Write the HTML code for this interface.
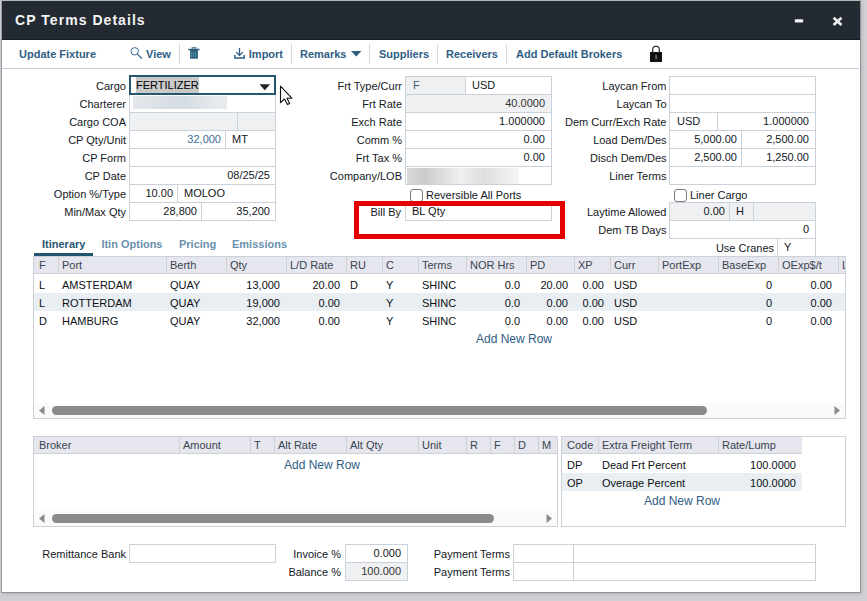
<!DOCTYPE html>
<html><head><meta charset="utf-8"><style>
html,body{margin:0;padding:0;}
body{width:867px;height:601px;position:relative;overflow:hidden;background:#cfcfd4;font-family:"Liberation Sans",sans-serif;}
body>div,body>svg{position:absolute;}
.t{position:absolute;white-space:nowrap;}
</style></head><body>
<div style="left:1px;top:0;width:860px;height:593px;background:#fff;border-left:1px solid #9c9ea3;border-right:1px solid #8f9197;border-bottom:1px solid #8f9197;border-top:1px solid #b5b6ba;box-sizing:border-box;box-shadow:1px 1px 3px rgba(0,0,0,0.12)"></div>
<div style="left:2px;top:1px;width:858px;height:39px;background:#232a31;"></div>
<div style="left:2px;top:39px;width:858px;height:1px;background:#161d22;"></div>
<div class="t" style="left:15px;top:11px;font:bold 14px/18px 'Liberation Sans',sans-serif;color:#f4f4f4;letter-spacing:1.05px;">CP Terms Details</div>
<svg style="position:absolute;left:794px;top:18px" width="11" height="6" viewBox="0 0 11 6"><rect x="0.8" y="1.3" width="8.4" height="3.2" rx="0.8" fill="#f2f2f2"/></svg>
<svg style="position:absolute;left:832px;top:16px" width="11" height="11" viewBox="0 0 11 11"><path d="M1.6 1.7 L9.5 8.9 M9.5 1.7 L1.6 8.9" stroke="#ececec" stroke-width="2.7" stroke-linecap="butt"/></svg>
<div class="t" style="left:19px;top:45px;font:bold 11px/18px 'Liberation Sans',sans-serif;color:#2f5d84;">Update Fixture</div>
<svg style="position:absolute;left:129px;top:46px" width="14" height="14" viewBox="0 0 14 14"><circle cx="5.7" cy="5.3" r="3.7" fill="none" stroke="#3a6b95" stroke-width="1"/><path d="M8.4 8.1 L12.5 12.3" stroke="#3a6b95" stroke-width="1.3" stroke-linecap="round"/></svg>
<div class="t" style="left:146px;top:45px;font:bold 11px/18px 'Liberation Sans',sans-serif;color:#2f5d84;">View</div>
<div style="left:179px;top:44px;width:1px;height:20px;background:#d3dae1;"></div>
<svg style="position:absolute;left:188px;top:46px" width="12" height="14" viewBox="0 0 12 14"><rect x="4.1" y="1.4" width="3.8" height="1.6" fill="none" stroke="#5a7f95" stroke-width="0.9"/><rect x="0.2" y="2.8" width="11.4" height="1.4" fill="#2d5f7a"/><rect x="2.1" y="4" width="7.8" height="8.7" fill="#2d5f7a"/><path d="M3.6 5.6 V11.4 M5.6 5.6 V11.4 M7.6 5.6 V11.4" stroke="#4f93a5" stroke-width="0.9"/></svg>
<svg style="position:absolute;left:233px;top:47px" width="13" height="12" viewBox="0 0 13 12"><path d="M6.5 1 V8.2" stroke="#2f5d84" stroke-width="1.3"/><path d="M3.3 5.2 L6.5 8.4 L9.7 5.2" fill="none" stroke="#2f5d84" stroke-width="1.3"/><path d="M1.8 8 V11 H11.2 V8" fill="none" stroke="#2f5d84" stroke-width="1.5"/></svg>
<div class="t" style="left:248.8px;top:45px;font:bold 11px/18px 'Liberation Sans',sans-serif;color:#2f5d84;">Import</div>
<div style="left:291px;top:44px;width:1px;height:20px;background:#d3dae1;"></div>
<div class="t" style="left:300px;top:45px;font:bold 11px/18px 'Liberation Sans',sans-serif;color:#2f5d84;">Remarks</div>
<svg style="position:absolute;left:351px;top:51px" width="11" height="6" viewBox="0 0 11 6"><path d="M0 0 H10.5 L5.25 5.6 Z" fill="#2d5f7a"/></svg>
<div style="left:369px;top:44px;width:1px;height:20px;background:#d3dae1;"></div>
<div class="t" style="left:379px;top:45px;font:bold 11px/18px 'Liberation Sans',sans-serif;color:#2f5d84;">Suppliers</div>
<div style="left:437px;top:44px;width:1px;height:20px;background:#d3dae1;"></div>
<div class="t" style="left:446px;top:45px;font:bold 11px/18px 'Liberation Sans',sans-serif;color:#2f5d84;">Receivers</div>
<div style="left:506px;top:44px;width:1px;height:20px;background:#d3dae1;"></div>
<div class="t" style="left:516px;top:45px;font:bold 11px/18px 'Liberation Sans',sans-serif;color:#2f5d84;">Add Default Brokers</div>
<svg style="position:absolute;left:649px;top:45px" width="14" height="18" viewBox="0 0 14 18"><path d="M3.7 7.5 V4.6 A3.3 3.3 0 0 1 10.3 4.6 V7.5" fill="none" stroke="#111" stroke-width="1.1"/><rect x="1" y="7" width="12" height="10" fill="#111"/><rect x="6.6" y="10" width="0.9" height="4" fill="#bbb"/></svg>
<div style="left:2px;top:68px;width:857px;height:1px;background:#c6cfd8;"></div>
<div style="left:129px;top:75px;width:147px;height:20px;border:2px solid #27566f;box-sizing:border-box;background:#fff"></div>
<div style="left:136px;top:77px;width:63px;height:16px;background:#c9c9c9;"></div>
<div class="t" style="left:136px;top:76px;font:11px/18px 'Liberation Sans',sans-serif;color:#000;">FERTILIZER</div>
<svg style="position:absolute;left:259px;top:84px" width="12" height="7" viewBox="0 0 12 7"><path d="M0.5 0.3 H11 L5.75 6.3 Z" fill="#222"/></svg>
<div class="t" style="left:-74px;top:77px;width:200px;text-align:right;font:11px/18px 'Liberation Sans',sans-serif;color:#141823;">Cargo</div>
<div style="left:129px;top:112px;width:147px;height:18px;background:#eff0f2;"></div>
<div style="left:129px;top:112px;width:147px;height:1px;background:#cad1d9;"></div>
<div style="left:129px;top:130px;width:147px;height:1px;background:#cad1d9;"></div>
<div style="left:129px;top:148px;width:147px;height:1px;background:#cad1d9;"></div>
<div style="left:129px;top:166px;width:147px;height:1px;background:#cad1d9;"></div>
<div style="left:129px;top:184px;width:147px;height:1px;background:#cad1d9;"></div>
<div style="left:129px;top:202px;width:147px;height:1px;background:#cad1d9;"></div>
<div style="left:129px;top:220px;width:147px;height:1px;background:#cad1d9;"></div>
<div style="left:129px;top:95px;width:1px;height:126px;background:#cad1d9;"></div>
<div style="left:275px;top:95px;width:1px;height:126px;background:#cad1d9;"></div>
<div style="left:237px;top:112px;width:1px;height:18px;background:#cad1d9;"></div>
<div style="left:225px;top:130px;width:1px;height:18px;background:#cad1d9;"></div>
<div style="left:177px;top:184px;width:1px;height:18px;background:#cad1d9;"></div>
<div style="left:201px;top:202px;width:1px;height:18px;background:#cad1d9;"></div>
<div style="left:133px;top:96px;width:94px;height:13px;background:linear-gradient(90deg,#e3e7eb 0%,#d9dfe4 35%,#d6dde2 55%,#e4e8ec 85%,#e9ecef 100%);filter:blur(0.4px)"></div>
<div class="t" style="left:-74px;top:95px;width:200px;text-align:right;font:11px/18px 'Liberation Sans',sans-serif;color:#141823;">Charterer</div>
<div class="t" style="left:-74px;top:113px;width:200px;text-align:right;font:11px/18px 'Liberation Sans',sans-serif;color:#141823;">Cargo COA</div>
<div class="t" style="left:-74px;top:131px;width:200px;text-align:right;font:11px/18px 'Liberation Sans',sans-serif;color:#141823;">CP Qty/Unit</div>
<div class="t" style="left:-74px;top:149px;width:200px;text-align:right;font:11px/18px 'Liberation Sans',sans-serif;color:#141823;">CP Form</div>
<div class="t" style="left:-74px;top:167px;width:200px;text-align:right;font:11px/18px 'Liberation Sans',sans-serif;color:#141823;">CP Date</div>
<div class="t" style="left:-74px;top:185px;width:200px;text-align:right;font:11px/18px 'Liberation Sans',sans-serif;color:#141823;">Option %/Type</div>
<div class="t" style="left:-74px;top:203px;width:200px;text-align:right;font:11px/18px 'Liberation Sans',sans-serif;color:#141823;">Min/Max Qty</div>
<div class="t" style="left:141px;top:130px;width:80px;text-align:right;font:11px/18px 'Liberation Sans',sans-serif;color:#3d6d99;">32,000</div>
<div class="t" style="left:232px;top:130px;font:11px/18px 'Liberation Sans',sans-serif;color:#141823;">MT</div>
<div class="t" style="left:190px;top:166px;width:80px;text-align:right;font:11px/18px 'Liberation Sans',sans-serif;color:#141823;">08/25/25</div>
<div class="t" style="left:133px;top:184px;width:40px;text-align:right;font:11px/18px 'Liberation Sans',sans-serif;color:#141823;">10.00</div>
<div class="t" style="left:184px;top:184px;font:11px/18px 'Liberation Sans',sans-serif;color:#141823;">MOLOO</div>
<div class="t" style="left:137px;top:202px;width:60px;text-align:right;font:11px/18px 'Liberation Sans',sans-serif;color:#141823;">28,800</div>
<div class="t" style="left:210px;top:202px;width:60px;text-align:right;font:11px/18px 'Liberation Sans',sans-serif;color:#141823;">35,200</div>
<div style="left:405px;top:76px;width:60px;height:18px;background:#eff0f2;"></div>
<div style="left:405px;top:94px;width:147px;height:18px;background:#eff0f2;"></div>
<div style="left:405px;top:76px;width:147px;height:1px;background:#cad1d9;"></div>
<div style="left:405px;top:94px;width:147px;height:1px;background:#cad1d9;"></div>
<div style="left:405px;top:112px;width:147px;height:1px;background:#cad1d9;"></div>
<div style="left:405px;top:130px;width:147px;height:1px;background:#cad1d9;"></div>
<div style="left:405px;top:148px;width:147px;height:1px;background:#cad1d9;"></div>
<div style="left:405px;top:166px;width:147px;height:1px;background:#cad1d9;"></div>
<div style="left:405px;top:184px;width:147px;height:1px;background:#cad1d9;"></div>
<div style="left:405px;top:76px;width:1px;height:109px;background:#cad1d9;"></div>
<div style="left:551px;top:76px;width:1px;height:109px;background:#cad1d9;"></div>
<div style="left:465px;top:76px;width:1px;height:18px;background:#cad1d9;"></div>
<div class="t" style="left:202px;top:77px;width:200px;text-align:right;font:11px/18px 'Liberation Sans',sans-serif;color:#141823;">Frt Type/Curr</div>
<div class="t" style="left:202px;top:95px;width:200px;text-align:right;font:11px/18px 'Liberation Sans',sans-serif;color:#141823;">Frt Rate</div>
<div class="t" style="left:202px;top:113px;width:200px;text-align:right;font:11px/18px 'Liberation Sans',sans-serif;color:#141823;">Exch Rate</div>
<div class="t" style="left:202px;top:131px;width:200px;text-align:right;font:11px/18px 'Liberation Sans',sans-serif;color:#141823;">Comm %</div>
<div class="t" style="left:202px;top:149px;width:200px;text-align:right;font:11px/18px 'Liberation Sans',sans-serif;color:#141823;">Frt Tax %</div>
<div class="t" style="left:202px;top:167px;width:200px;text-align:right;font:11px/18px 'Liberation Sans',sans-serif;color:#141823;">Company/LOB</div>
<div class="t" style="left:413px;top:76px;font:11px/18px 'Liberation Sans',sans-serif;color:#3c5a78;">F</div>
<div class="t" style="left:472px;top:76px;font:11px/18px 'Liberation Sans',sans-serif;color:#141823;">USD</div>
<div class="t" style="left:465px;top:94px;width:80px;text-align:right;font:11px/18px 'Liberation Sans',sans-serif;color:#333;">40.0000</div>
<div class="t" style="left:465px;top:112px;width:80px;text-align:right;font:11px/18px 'Liberation Sans',sans-serif;color:#141823;">1.000000</div>
<div class="t" style="left:465px;top:130px;width:80px;text-align:right;font:11px/18px 'Liberation Sans',sans-serif;color:#141823;">0.00</div>
<div class="t" style="left:465px;top:148px;width:80px;text-align:right;font:11px/18px 'Liberation Sans',sans-serif;color:#141823;">0.00</div>
<div style="left:407px;top:168px;width:112px;height:16px;background:linear-gradient(90deg,#d9d9d9 0%,#cbcbcb 15%,#dcdcdc 30%,#f0f0f0 48%,#dedede 68%,#ececec 88%,#f6f6f6 100%);filter:blur(0.5px)"></div>
<div style="left:410px;top:189px;width:13px;height:13px;border:1px solid #7a7a7a;border-radius:3px;box-sizing:border-box;background:#fff"></div>
<div class="t" style="left:426px;top:186px;font:11px/18px 'Liberation Sans',sans-serif;color:#141823;">Reversible All Ports</div>
<div style="left:405px;top:202px;width:147px;height:19px;border:1px solid #cad1d9;box-sizing:border-box;"></div>
<div class="t" style="left:201px;top:203px;width:200px;text-align:right;font:11px/18px 'Liberation Sans',sans-serif;color:#141823;">Bill By</div>
<div class="t" style="left:412px;top:202px;font:11px/18px 'Liberation Sans',sans-serif;color:#111;">BL Qty</div>
<div style="left:669px;top:76px;width:147px;height:1px;background:#cad1d9;"></div>
<div style="left:669px;top:94px;width:147px;height:1px;background:#cad1d9;"></div>
<div style="left:669px;top:112px;width:147px;height:1px;background:#cad1d9;"></div>
<div style="left:669px;top:130px;width:147px;height:1px;background:#cad1d9;"></div>
<div style="left:669px;top:148px;width:147px;height:1px;background:#cad1d9;"></div>
<div style="left:669px;top:166px;width:147px;height:1px;background:#cad1d9;"></div>
<div style="left:669px;top:184px;width:147px;height:1px;background:#cad1d9;"></div>
<div style="left:669px;top:76px;width:1px;height:109px;background:#cad1d9;"></div>
<div style="left:815px;top:76px;width:1px;height:109px;background:#cad1d9;"></div>
<div style="left:717px;top:112px;width:1px;height:18px;background:#cad1d9;"></div>
<div style="left:741px;top:130px;width:1px;height:36px;background:#cad1d9;"></div>
<div class="t" style="left:466.5px;top:77px;width:200px;text-align:right;font:11px/18px 'Liberation Sans',sans-serif;color:#141823;">Laycan From</div>
<div class="t" style="left:466.5px;top:95px;width:200px;text-align:right;font:11px/18px 'Liberation Sans',sans-serif;color:#141823;">Laycan To</div>
<div class="t" style="left:466.5px;top:113px;width:200px;text-align:right;font:11px/18px 'Liberation Sans',sans-serif;color:#141823;">Dem Curr/Exch Rate</div>
<div class="t" style="left:466.5px;top:131px;width:200px;text-align:right;font:11px/18px 'Liberation Sans',sans-serif;color:#141823;">Load Dem/Des</div>
<div class="t" style="left:466.5px;top:149px;width:200px;text-align:right;font:11px/18px 'Liberation Sans',sans-serif;color:#141823;">Disch Dem/Des</div>
<div class="t" style="left:466.5px;top:167px;width:200px;text-align:right;font:11px/18px 'Liberation Sans',sans-serif;color:#141823;">Liner Terms</div>
<div class="t" style="left:677px;top:112px;font:11px/18px 'Liberation Sans',sans-serif;color:#141823;">USD</div>
<div class="t" style="left:729px;top:112px;width:80px;text-align:right;font:11px/18px 'Liberation Sans',sans-serif;color:#141823;">1.000000</div>
<div class="t" style="left:657px;top:130px;width:80px;text-align:right;font:11px/18px 'Liberation Sans',sans-serif;color:#141823;">5,000.00</div>
<div class="t" style="left:729px;top:130px;width:80px;text-align:right;font:11px/18px 'Liberation Sans',sans-serif;color:#141823;">2,500.00</div>
<div class="t" style="left:657px;top:148px;width:80px;text-align:right;font:11px/18px 'Liberation Sans',sans-serif;color:#141823;">2,500.00</div>
<div class="t" style="left:729px;top:148px;width:80px;text-align:right;font:11px/18px 'Liberation Sans',sans-serif;color:#141823;">1,250.00</div>
<div style="left:674px;top:189px;width:13px;height:13px;border:1px solid #7a7a7a;border-radius:3px;box-sizing:border-box;background:#fff"></div>
<div class="t" style="left:690px;top:186px;font:11px/18px 'Liberation Sans',sans-serif;color:#141823;">Liner Cargo</div>
<div style="left:669px;top:202px;width:147px;height:18px;background:#eff0f2;"></div>
<div style="left:669px;top:202px;width:147px;height:1px;background:#cad1d9;"></div>
<div style="left:669px;top:220px;width:147px;height:1px;background:#cad1d9;"></div>
<div style="left:669px;top:238px;width:147px;height:1px;background:#cad1d9;"></div>
<div style="left:669px;top:202px;width:1px;height:37px;background:#cad1d9;"></div>
<div style="left:815px;top:202px;width:1px;height:55px;background:#cad1d9;"></div>
<div style="left:729px;top:202px;width:1px;height:18px;background:#cad1d9;"></div>
<div style="left:753px;top:202px;width:1px;height:18px;background:#cad1d9;"></div>
<div class="t" style="left:466.5px;top:203px;width:200px;text-align:right;font:11px/18px 'Liberation Sans',sans-serif;color:#141823;">Laytime Allowed</div>
<div class="t" style="left:466.5px;top:221px;width:200px;text-align:right;font:11px/18px 'Liberation Sans',sans-serif;color:#141823;">Dem TB Days</div>
<div class="t" style="left:665px;top:202px;width:60px;text-align:right;font:11px/18px 'Liberation Sans',sans-serif;color:#141823;">0.00</div>
<div class="t" style="left:736px;top:202px;font:11px/18px 'Liberation Sans',sans-serif;color:#141823;">H</div>
<div class="t" style="left:749px;top:220px;width:60px;text-align:right;font:11px/18px 'Liberation Sans',sans-serif;color:#141823;">0</div>
<div style="left:777px;top:238px;width:1px;height:19px;background:#cad1d9;"></div>
<div class="t" style="left:574px;top:239px;width:200px;text-align:right;font:11px/18px 'Liberation Sans',sans-serif;color:#141823;">Use Cranes</div>
<div class="t" style="left:784px;top:238px;font:11px/18px 'Liberation Sans',sans-serif;color:#141823;">Y</div>
<div style="left:354px;top:201px;width:211px;height:38px;border:5px solid #e40000;box-sizing:border-box"></div>
<div class="t" style="left:42px;top:235px;font:bold 11px/18px 'Liberation Sans',sans-serif;color:#275572;">Itinerary</div>
<div class="t" style="left:101.4px;top:235px;font:bold 11px/18px 'Liberation Sans',sans-serif;color:#6b90ae;">Itin Options</div>
<div class="t" style="left:179px;top:235px;font:bold 11px/18px 'Liberation Sans',sans-serif;color:#6b90ae;">Pricing</div>
<div class="t" style="left:232px;top:235px;font:bold 11px/18px 'Liberation Sans',sans-serif;color:#6b90ae;">Emissions</div>
<div style="left:34px;top:253px;width:59px;height:3px;background:#22546e;"></div>
<div style="left:33px;top:256px;width:813px;height:163px;border:1px solid #cad1d9;box-sizing:border-box;"></div>
<div style="left:34px;top:257px;width:811px;height:16px;background:#e6e7ee;"></div>
<div style="left:33px;top:273px;width:812px;height:1px;background:#cdd2da;"></div>
<div style="left:58px;top:257px;width:1px;height:16px;background:#cdd2da;"></div>
<div style="left:166px;top:257px;width:1px;height:16px;background:#cdd2da;"></div>
<div style="left:226px;top:257px;width:1px;height:16px;background:#cdd2da;"></div>
<div style="left:286px;top:257px;width:1px;height:16px;background:#cdd2da;"></div>
<div style="left:346px;top:257px;width:1px;height:16px;background:#cdd2da;"></div>
<div style="left:382px;top:257px;width:1px;height:16px;background:#cdd2da;"></div>
<div style="left:418px;top:257px;width:1px;height:16px;background:#cdd2da;"></div>
<div style="left:466px;top:257px;width:1px;height:16px;background:#cdd2da;"></div>
<div style="left:526px;top:257px;width:1px;height:16px;background:#cdd2da;"></div>
<div style="left:574px;top:257px;width:1px;height:16px;background:#cdd2da;"></div>
<div style="left:610px;top:257px;width:1px;height:16px;background:#cdd2da;"></div>
<div style="left:658px;top:257px;width:1px;height:16px;background:#cdd2da;"></div>
<div style="left:718px;top:257px;width:1px;height:16px;background:#cdd2da;"></div>
<div style="left:778px;top:257px;width:1px;height:16px;background:#cdd2da;"></div>
<div style="left:838px;top:257px;width:1px;height:16px;background:#cdd2da;"></div>
<div class="t" style="left:39px;top:256px;font:11px/18px 'Liberation Sans',sans-serif;color:#39434f;">F</div>
<div class="t" style="left:62px;top:256px;font:11px/18px 'Liberation Sans',sans-serif;color:#39434f;">Port</div>
<div class="t" style="left:170px;top:256px;font:11px/18px 'Liberation Sans',sans-serif;color:#39434f;">Berth</div>
<div class="t" style="left:230px;top:256px;font:11px/18px 'Liberation Sans',sans-serif;color:#39434f;">Qty</div>
<div class="t" style="left:290px;top:256px;font:11px/18px 'Liberation Sans',sans-serif;color:#39434f;">L/D Rate</div>
<div class="t" style="left:350px;top:256px;font:11px/18px 'Liberation Sans',sans-serif;color:#39434f;">RU</div>
<div class="t" style="left:386px;top:256px;font:11px/18px 'Liberation Sans',sans-serif;color:#39434f;">C</div>
<div class="t" style="left:422px;top:256px;font:11px/18px 'Liberation Sans',sans-serif;color:#39434f;">Terms</div>
<div class="t" style="left:470px;top:256px;font:11px/18px 'Liberation Sans',sans-serif;color:#39434f;">NOR Hrs</div>
<div class="t" style="left:530px;top:256px;font:11px/18px 'Liberation Sans',sans-serif;color:#39434f;">PD</div>
<div class="t" style="left:578px;top:256px;font:11px/18px 'Liberation Sans',sans-serif;color:#39434f;">XP</div>
<div class="t" style="left:614px;top:256px;font:11px/18px 'Liberation Sans',sans-serif;color:#39434f;">Curr</div>
<div class="t" style="left:662px;top:256px;font:11px/18px 'Liberation Sans',sans-serif;color:#39434f;">PortExp</div>
<div class="t" style="left:722px;top:256px;font:11px/18px 'Liberation Sans',sans-serif;color:#39434f;">BaseExp</div>
<div class="t" style="left:782px;top:256px;font:11px/18px 'Liberation Sans',sans-serif;color:#39434f;">OExp$/t</div>
<div style="left:838px;top:256px;width:7px;height:17px;overflow:hidden"><div class="t" style="left:4px;top:0;font:11px/18px 'Liberation Sans',sans-serif;color:#39434f">L</div></div>
<div style="left:34px;top:293px;width:811px;height:18px;background:#e8eef1;"></div>
<div class="t" style="left:39px;top:276px;font:11px/18px 'Liberation Sans',sans-serif;color:#0d1016;">L</div>
<div class="t" style="left:62px;top:276px;font:11px/18px 'Liberation Sans',sans-serif;color:#0d1016;">AMSTERDAM</div>
<div class="t" style="left:170px;top:276px;font:11px/18px 'Liberation Sans',sans-serif;color:#0d1016;">QUAY</div>
<div class="t" style="left:200px;top:276px;width:80px;text-align:right;font:11px/18px 'Liberation Sans',sans-serif;color:#0d1016;">13,000</div>
<div class="t" style="left:260px;top:276px;width:80px;text-align:right;font:11px/18px 'Liberation Sans',sans-serif;color:#0d1016;">20.00</div>
<div class="t" style="left:350px;top:276px;font:11px/18px 'Liberation Sans',sans-serif;color:#0d1016;">D</div>
<div class="t" style="left:386px;top:276px;font:11px/18px 'Liberation Sans',sans-serif;color:#0d1016;">Y</div>
<div class="t" style="left:422px;top:276px;font:11px/18px 'Liberation Sans',sans-serif;color:#0d1016;">SHINC</div>
<div class="t" style="left:440px;top:276px;width:80px;text-align:right;font:11px/18px 'Liberation Sans',sans-serif;color:#0d1016;">0.0</div>
<div class="t" style="left:488px;top:276px;width:80px;text-align:right;font:11px/18px 'Liberation Sans',sans-serif;color:#0d1016;">20.00</div>
<div class="t" style="left:524px;top:276px;width:80px;text-align:right;font:11px/18px 'Liberation Sans',sans-serif;color:#0d1016;">0.00</div>
<div class="t" style="left:614px;top:276px;font:11px/18px 'Liberation Sans',sans-serif;color:#0d1016;">USD</div>
<div class="t" style="left:692px;top:276px;width:80px;text-align:right;font:11px/18px 'Liberation Sans',sans-serif;color:#0d1016;">0</div>
<div class="t" style="left:752px;top:276px;width:80px;text-align:right;font:11px/18px 'Liberation Sans',sans-serif;color:#0d1016;">0.00</div>
<div class="t" style="left:39px;top:294px;font:11px/18px 'Liberation Sans',sans-serif;color:#0d1016;">L</div>
<div class="t" style="left:62px;top:294px;font:11px/18px 'Liberation Sans',sans-serif;color:#0d1016;">ROTTERDAM</div>
<div class="t" style="left:170px;top:294px;font:11px/18px 'Liberation Sans',sans-serif;color:#0d1016;">QUAY</div>
<div class="t" style="left:200px;top:294px;width:80px;text-align:right;font:11px/18px 'Liberation Sans',sans-serif;color:#0d1016;">19,000</div>
<div class="t" style="left:260px;top:294px;width:80px;text-align:right;font:11px/18px 'Liberation Sans',sans-serif;color:#0d1016;">0.00</div>
<div class="t" style="left:386px;top:294px;font:11px/18px 'Liberation Sans',sans-serif;color:#0d1016;">Y</div>
<div class="t" style="left:422px;top:294px;font:11px/18px 'Liberation Sans',sans-serif;color:#0d1016;">SHINC</div>
<div class="t" style="left:440px;top:294px;width:80px;text-align:right;font:11px/18px 'Liberation Sans',sans-serif;color:#0d1016;">0.0</div>
<div class="t" style="left:488px;top:294px;width:80px;text-align:right;font:11px/18px 'Liberation Sans',sans-serif;color:#0d1016;">0.00</div>
<div class="t" style="left:524px;top:294px;width:80px;text-align:right;font:11px/18px 'Liberation Sans',sans-serif;color:#0d1016;">0.00</div>
<div class="t" style="left:614px;top:294px;font:11px/18px 'Liberation Sans',sans-serif;color:#0d1016;">USD</div>
<div class="t" style="left:692px;top:294px;width:80px;text-align:right;font:11px/18px 'Liberation Sans',sans-serif;color:#0d1016;">0</div>
<div class="t" style="left:752px;top:294px;width:80px;text-align:right;font:11px/18px 'Liberation Sans',sans-serif;color:#0d1016;">0.00</div>
<div class="t" style="left:39px;top:312px;font:11px/18px 'Liberation Sans',sans-serif;color:#0d1016;">D</div>
<div class="t" style="left:62px;top:312px;font:11px/18px 'Liberation Sans',sans-serif;color:#0d1016;">HAMBURG</div>
<div class="t" style="left:170px;top:312px;font:11px/18px 'Liberation Sans',sans-serif;color:#0d1016;">QUAY</div>
<div class="t" style="left:200px;top:312px;width:80px;text-align:right;font:11px/18px 'Liberation Sans',sans-serif;color:#0d1016;">32,000</div>
<div class="t" style="left:260px;top:312px;width:80px;text-align:right;font:11px/18px 'Liberation Sans',sans-serif;color:#0d1016;">0.00</div>
<div class="t" style="left:386px;top:312px;font:11px/18px 'Liberation Sans',sans-serif;color:#0d1016;">Y</div>
<div class="t" style="left:422px;top:312px;font:11px/18px 'Liberation Sans',sans-serif;color:#0d1016;">SHINC</div>
<div class="t" style="left:440px;top:312px;width:80px;text-align:right;font:11px/18px 'Liberation Sans',sans-serif;color:#0d1016;">0.0</div>
<div class="t" style="left:488px;top:312px;width:80px;text-align:right;font:11px/18px 'Liberation Sans',sans-serif;color:#0d1016;">0.00</div>
<div class="t" style="left:524px;top:312px;width:80px;text-align:right;font:11px/18px 'Liberation Sans',sans-serif;color:#0d1016;">0.00</div>
<div class="t" style="left:614px;top:312px;font:11px/18px 'Liberation Sans',sans-serif;color:#0d1016;">USD</div>
<div class="t" style="left:692px;top:312px;width:80px;text-align:right;font:11px/18px 'Liberation Sans',sans-serif;color:#0d1016;">0</div>
<div class="t" style="left:752px;top:312px;width:80px;text-align:right;font:11px/18px 'Liberation Sans',sans-serif;color:#0d1016;">0.00</div>
<div class="t" style="left:454px;top:330px;width:120px;text-align:center;font:12px/18px 'Liberation Sans',sans-serif;color:#2f5d84;">Add New Row</div>
<div style="left:34px;top:403px;width:811px;height:15px;background:#fafafa;"></div>
<svg style="position:absolute;left:39px;top:406px" width="6" height="9" viewBox="0 0 6 9"><path d="M5.5 0 V9 L0 4.5 Z" fill="#8a8a8a"/></svg>
<div style="left:52px;top:406px;width:655px;height:9px;background:#8a8a8a;border-radius:4.5px;"></div>
<svg style="position:absolute;left:834px;top:406px" width="6" height="9" viewBox="0 0 6 9"><path d="M0.5 0 V9 L6 4.5 Z" fill="#8a8a8a"/></svg>
<div style="left:33px;top:436px;width:525px;height:91px;border:1px solid #cad1d9;box-sizing:border-box;"></div>
<div style="left:34px;top:437px;width:523px;height:16px;background:#e6e7ee;"></div>
<div style="left:33px;top:453px;width:524px;height:1px;background:#cdd2da;"></div>
<div style="left:179px;top:437px;width:1px;height:16px;background:#cdd2da;"></div>
<div style="left:250px;top:437px;width:1px;height:16px;background:#cdd2da;"></div>
<div style="left:274px;top:437px;width:1px;height:16px;background:#cdd2da;"></div>
<div style="left:346px;top:437px;width:1px;height:16px;background:#cdd2da;"></div>
<div style="left:418px;top:437px;width:1px;height:16px;background:#cdd2da;"></div>
<div style="left:466px;top:437px;width:1px;height:16px;background:#cdd2da;"></div>
<div style="left:490px;top:437px;width:1px;height:16px;background:#cdd2da;"></div>
<div style="left:514px;top:437px;width:1px;height:16px;background:#cdd2da;"></div>
<div style="left:538px;top:437px;width:1px;height:16px;background:#cdd2da;"></div>
<div class="t" style="left:39px;top:436px;font:11px/18px 'Liberation Sans',sans-serif;color:#39434f;">Broker</div>
<div class="t" style="left:183px;top:436px;font:11px/18px 'Liberation Sans',sans-serif;color:#39434f;">Amount</div>
<div class="t" style="left:254px;top:436px;font:11px/18px 'Liberation Sans',sans-serif;color:#39434f;">T</div>
<div class="t" style="left:278px;top:436px;font:11px/18px 'Liberation Sans',sans-serif;color:#39434f;">Alt Rate</div>
<div class="t" style="left:350px;top:436px;font:11px/18px 'Liberation Sans',sans-serif;color:#39434f;">Alt Qty</div>
<div class="t" style="left:422px;top:436px;font:11px/18px 'Liberation Sans',sans-serif;color:#39434f;">Unit</div>
<div class="t" style="left:470px;top:436px;font:11px/18px 'Liberation Sans',sans-serif;color:#39434f;">R</div>
<div class="t" style="left:494px;top:436px;font:11px/18px 'Liberation Sans',sans-serif;color:#39434f;">F</div>
<div class="t" style="left:518px;top:436px;font:11px/18px 'Liberation Sans',sans-serif;color:#39434f;">D</div>
<div class="t" style="left:542px;top:436px;font:11px/18px 'Liberation Sans',sans-serif;color:#39434f;">M</div>
<div class="t" style="left:262px;top:456px;width:120px;text-align:center;font:12px/18px 'Liberation Sans',sans-serif;color:#2f5d84;">Add New Row</div>
<div style="left:34px;top:511px;width:523px;height:15px;background:#fafafa;"></div>
<svg style="position:absolute;left:39px;top:514px" width="6" height="9" viewBox="0 0 6 9"><path d="M5.5 0 V9 L0 4.5 Z" fill="#8a8a8a"/></svg>
<div style="left:52px;top:514px;width:442px;height:9px;background:#8a8a8a;border-radius:4.5px;"></div>
<svg style="position:absolute;left:546px;top:514px" width="6" height="9" viewBox="0 0 6 9"><path d="M0.5 0 V9 L6 4.5 Z" fill="#8a8a8a"/></svg>
<div style="left:561px;top:436px;width:285px;height:91px;border:1px solid #cad1d9;box-sizing:border-box;"></div>
<div style="left:562px;top:437px;width:240px;height:16px;background:#e6e7ee;"></div>
<div style="left:562px;top:453px;width:240px;height:1px;background:#cdd2da;"></div>
<div style="left:598px;top:437px;width:1px;height:16px;background:#cdd2da;"></div>
<div style="left:718px;top:437px;width:1px;height:16px;background:#cdd2da;"></div>
<div class="t" style="left:567px;top:436px;font:11px/18px 'Liberation Sans',sans-serif;color:#39434f;">Code</div>
<div class="t" style="left:602px;top:436px;font:11px/18px 'Liberation Sans',sans-serif;color:#39434f;">Extra Freight Term</div>
<div class="t" style="left:722px;top:436px;font:11px/18px 'Liberation Sans',sans-serif;color:#39434f;">Rate/Lump</div>
<div style="left:562px;top:473px;width:240px;height:18px;background:#e8eef1;"></div>
<div class="t" style="left:567px;top:456px;font:11px/18px 'Liberation Sans',sans-serif;color:#0d1016;">DP</div>
<div class="t" style="left:602px;top:456px;font:11px/18px 'Liberation Sans',sans-serif;color:#0d1016;">Dead Frt Percent</div>
<div class="t" style="left:716px;top:456px;width:80px;text-align:right;font:11px/18px 'Liberation Sans',sans-serif;color:#0d1016;">100.0000</div>
<div class="t" style="left:567px;top:474px;font:11px/18px 'Liberation Sans',sans-serif;color:#0d1016;">OP</div>
<div class="t" style="left:602px;top:474px;font:11px/18px 'Liberation Sans',sans-serif;color:#0d1016;">Overage Percent</div>
<div class="t" style="left:716px;top:474px;width:80px;text-align:right;font:11px/18px 'Liberation Sans',sans-serif;color:#0d1016;">100.0000</div>
<div class="t" style="left:622px;top:492px;width:120px;text-align:center;font:12px/18px 'Liberation Sans',sans-serif;color:#2f5d84;">Add New Row</div>
<div style="left:129px;top:544px;width:147px;height:19px;border:1px solid #cad1d9;box-sizing:border-box;"></div>
<div class="t" style="left:-74px;top:545px;width:200px;text-align:right;font:11px/18px 'Liberation Sans',sans-serif;color:#141823;">Remittance Bank</div>
<div style="left:345px;top:562px;width:62px;height:18px;background:#eff0f2;"></div>
<div style="left:345px;top:544px;width:63px;height:1px;background:#cad1d9;"></div>
<div style="left:345px;top:562px;width:63px;height:1px;background:#cad1d9;"></div>
<div style="left:345px;top:580px;width:63px;height:1px;background:#cad1d9;"></div>
<div style="left:345px;top:544px;width:1px;height:37px;background:#cad1d9;"></div>
<div style="left:407px;top:544px;width:1px;height:37px;background:#cad1d9;"></div>
<div class="t" style="left:141px;top:545px;width:200px;text-align:right;font:11px/18px 'Liberation Sans',sans-serif;color:#141823;">Invoice %</div>
<div class="t" style="left:141px;top:563px;width:200px;text-align:right;font:11px/18px 'Liberation Sans',sans-serif;color:#141823;">Balance %</div>
<div class="t" style="left:341px;top:544px;width:60px;text-align:right;font:11px/18px 'Liberation Sans',sans-serif;color:#141823;">0.000</div>
<div class="t" style="left:341px;top:562px;width:60px;text-align:right;font:11px/18px 'Liberation Sans',sans-serif;color:#333;">100.000</div>
<div style="left:513px;top:544px;width:303px;height:1px;background:#cad1d9;"></div>
<div style="left:513px;top:562px;width:303px;height:1px;background:#cad1d9;"></div>
<div style="left:513px;top:580px;width:303px;height:1px;background:#cad1d9;"></div>
<div style="left:513px;top:544px;width:1px;height:37px;background:#cad1d9;"></div>
<div style="left:573px;top:544px;width:1px;height:37px;background:#cad1d9;"></div>
<div style="left:815px;top:544px;width:1px;height:37px;background:#cad1d9;"></div>
<div class="t" style="left:310px;top:545px;width:200px;text-align:right;font:11px/18px 'Liberation Sans',sans-serif;color:#141823;">Payment Terms</div>
<div class="t" style="left:310px;top:563px;width:200px;text-align:right;font:11px/18px 'Liberation Sans',sans-serif;color:#141823;">Payment Terms</div>
<svg style="position:absolute;left:279px;top:85px" width="15" height="22" viewBox="0 0 15 22"><path d="M1.5 1.2 V17.6 L5.5 14 L8.5 19.6 L10.7 18.5 L8 13.2 H12.8 Z" fill="#fff" stroke="#111" stroke-width="1.1" stroke-linejoin="round"/></svg>
</body></html>
